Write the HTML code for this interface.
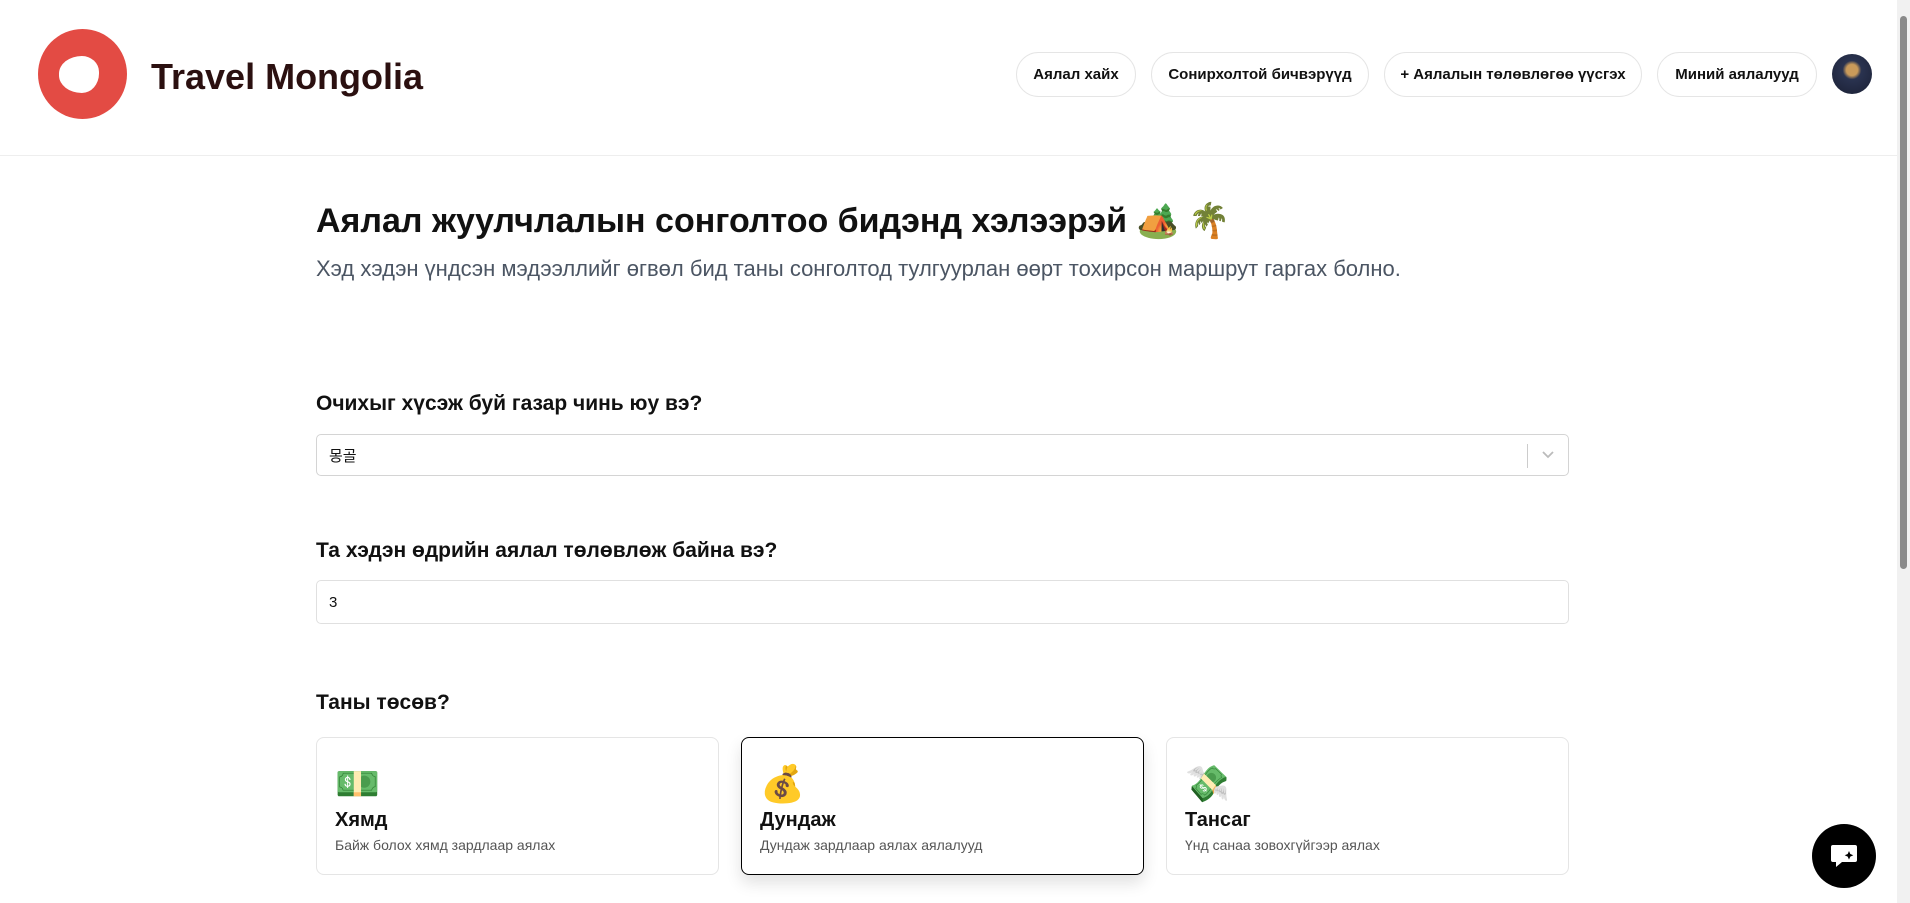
<!DOCTYPE html>
<html><head><meta charset="utf-8">
<style>
*{box-sizing:border-box;margin:0;padding:0}
body{width:1910px;height:903px;overflow:hidden;background:#fff;font-family:"Liberation Sans","Noto Sans CJK KR",sans-serif;color:#111;position:relative}
.hdr{position:absolute;left:0;top:0;width:1897px;height:156px;border-bottom:1px solid #eee}
.logo{position:absolute;left:38px;top:29px;width:89px;height:90px;border-radius:50%;background:#e34b44}
.logo i{position:absolute;left:21px;top:27px;width:40px;height:37px;background:#fff;border-radius:60% 45% 45% 60%/50% 45% 55% 50%}
.brand{position:absolute;left:151px;top:56px;font-size:36px;font-weight:bold;color:#2b1010}
.nb{position:absolute;top:52px;height:45px;border:1px solid #e5e5e5;border-radius:23px;font-size:15px;font-weight:bold;display:flex;align-items:center;justify-content:center;color:#111}
.av{position:absolute;left:1832px;top:54px;width:40px;height:40px;border-radius:50%;background:radial-gradient(circle at 50% 40%,#c99a5a 0 18%,#2a3350 30%,#1a1f33 100%)}
.sb{position:absolute;left:1897px;top:0;width:13px;height:903px;background:#f1f1f1}
.sb i{position:absolute;left:3px;top:16px;width:7px;height:553px;background:#8a8a8a;border-radius:4px}
h1{position:absolute;left:316px;top:201px;font-size:34px;font-weight:bold}
.sub{position:absolute;left:316px;top:256px;font-size:22px;color:#4b5563}
.lb{position:absolute;left:316px;font-size:21px;font-weight:bold}
.box{position:absolute;left:316px;width:1253px;border:1px solid #d4d4d4;border-radius:5px;font-size:15px;display:flex;align-items:center;padding-left:12px}
.card{position:absolute;top:737px;width:403px;height:138px;border:1px solid #e5e5e5;border-radius:8px;padding-left:18px}
.card .e{position:absolute;left:18px;top:25px;font-size:36px}
.card b{position:absolute;left:18px;top:71px;font-size:20px}
.card span{position:absolute;left:18px;top:99px;font-size:14px;color:#555}
.chat{position:absolute;left:1812px;top:824px;width:64px;height:64px;border-radius:50%;background:#000;display:flex;align-items:center;justify-content:center}
</style></head><body>
<div class="hdr">
<div class="logo"><i></i></div>
<div class="brand">Travel Mongolia</div>
<div class="nb" style="left:1016px;width:120px">Аялал хайх</div>
<div class="nb" style="left:1151px;width:218px">Сонирхолтой бичвэрүүд</div>
<div class="nb" style="left:1384px;width:258px">+ Аялалын төлөвлөгөө үүсгэх</div>
<div class="nb" style="left:1657px;width:160px">Миний аялалууд</div>
<div class="av"></div>
</div>
<div class="sb"><i></i></div>
<h1>Аялал жуулчлалын сонголтоо бидэнд хэлээрэй 🏕️ 🌴</h1>
<div class="sub">Хэд хэдэн үндсэн мэдээллийг өгвөл бид таны сонголтод тулгуурлан өөрт тохирсон маршрут гаргах болно.</div>
<div class="lb" style="top:392px">Очихыг хүсэж буй газар чинь юу вэ?</div>
<div class="box" style="top:434px;height:42px">몽골
<div style="position:absolute;right:40px;top:9px;width:1px;height:24px;background:#ccc"></div>
<svg style="position:absolute;right:13px;top:15px" width="14" height="10" viewBox="0 0 14 10"><path d="M2 2l5 5 5-5" stroke="#bbb" stroke-width="1.8" fill="none"/></svg></div>
<div class="lb" style="top:539px">Та хэдэн өдрийн аялал төлөвлөж байна вэ?</div>
<div class="box" style="top:580px;height:44px;border-color:#e0e0e0">3</div>
<div class="lb" style="top:691px">Таны төсөв?</div>
<div class="card" style="left:316px"><div class="e">💵</div><b>Хямд</b><span>Байж болох хямд зардлаар аялах</span></div>
<div class="card" style="left:741px;border:1.5px solid #000;box-shadow:0 8px 16px rgba(0,0,0,.12)"><div class="e">💰</div><b>Дундаж</b><span>Дундаж зардлаар аялах аялалууд</span></div>
<div class="card" style="left:1166px"><div class="e">💸</div><b>Тансаг</b><span>Үнд санаа зовохгүйгээр аялах</span></div>
<div class="chat"><svg width="30" height="28" viewBox="0 0 30 28"><path d="M4 3h22a2 2 0 0 1 2 2v13a2 2 0 0 1-2 2H13l-6 5v-5H4a2 2 0 0 1-2-2V5a2 2 0 0 1 2-2z" fill="#fff"/><path d="M20 9l1.3 3 3 1.3-3 1.3-1.3 3-1.3-3-3-1.3 3-1.3z" fill="#000"/></svg></div>
</body></html>
